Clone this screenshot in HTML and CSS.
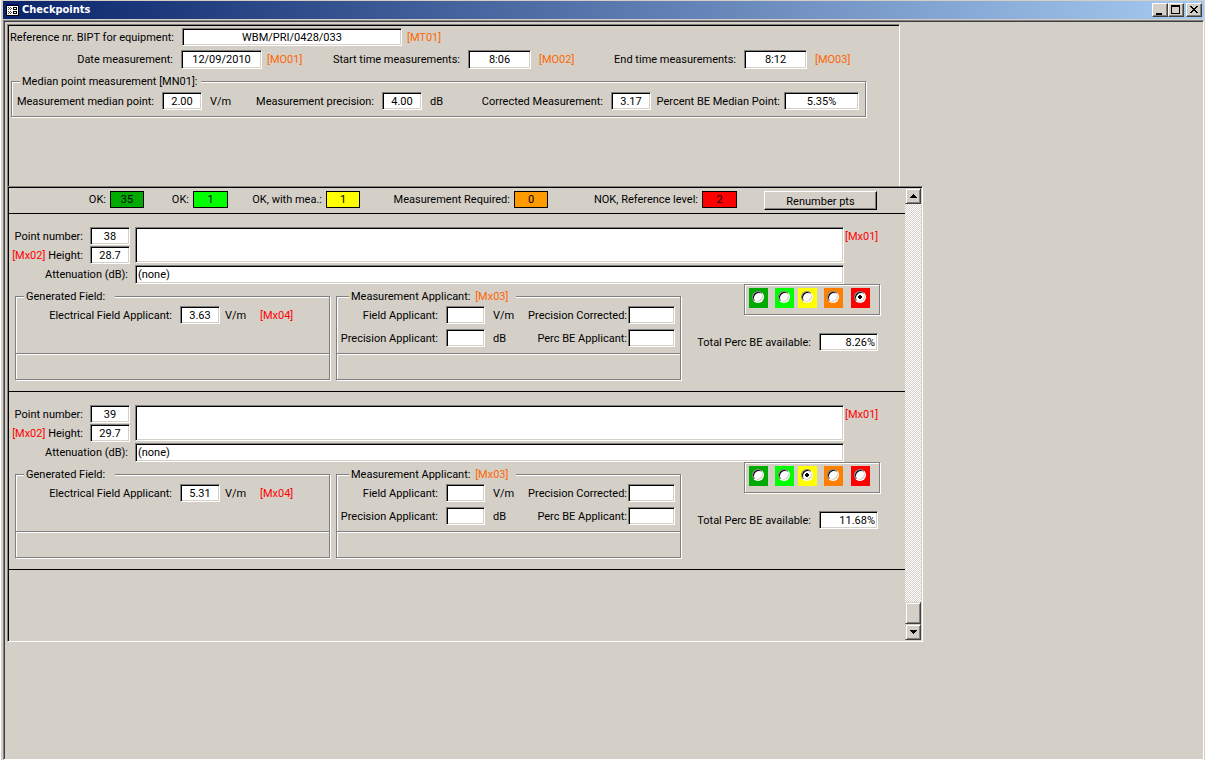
FILE: index.html
```html
<!DOCTYPE html>
<html lang="en">
<head>
<meta charset="utf-8">
<title>Checkpoints</title>
<link rel="stylesheet" href="styles.css">
</head>
<body>
<div class="window">
  <header class="titlebar">
    <svg class="app-icon" width="13" height="12" viewBox="0 0 13 12" shape-rendering="crispEdges" aria-hidden="true">
      <rect width="13" height="12" fill="#000"/>
      <rect width="13" height="1" fill="#000080"/>
      <rect x="1" y="2" width="11" height="9" fill="#fff"/>
      <path d="M2 3h1v1H2zM4 3h1v1H4zM3 4h1v1H3zM5 4h1v1H5zM2 5h1v1H2zM4 5h1v1H4zM2 7h1v1H2zM4 7h1v1H4zM3 8h1v1H3zM5 8h1v1H5zM2 9h1v1H2zM4 9h1v1H4z" fill="#555"/>
      <path fill-rule="evenodd" d="M7 3h4v3H7zM8 4v1h2V4zM7 7h4v3H7zM8 8v1h2V8z" fill="#000"/>
    </svg>
    <h1 class="title">Checkpoints</h1>
    <div class="window-buttons">
      <button class="win-btn" type="button" aria-label="Minimize"><svg width="12" height="10" viewBox="0 0 12 10" shape-rendering="crispEdges"><path d="M2 8h6v2H2z"/></svg></button>
      <button class="win-btn" type="button" aria-label="Maximize"><svg width="12" height="10" viewBox="0 0 12 10" shape-rendering="crispEdges"><path fill-rule="evenodd" d="M1 0h9v9H1zM2 2v6h7V2z"/></svg></button>
      <button class="win-btn close" type="button" aria-label="Close"><svg width="12" height="10" viewBox="0 0 12 10" shape-rendering="crispEdges"><path d="M2 1h2v1h1v1h2V2h1V1h2v1H9v1H8v1H7v1h1v1h1v1h1v1H8V7H7V6H5v1H4v1H2V7h1V6h1V5h1V4H4V3H3V2H2z"/></svg></button>
    </div>
  </header>

  <main class="client">
    <section class="panel general">
      <div class="row row-ref">
        <label class="lbl" for="ref">Reference nr. BIPT for equipment:</label>
        <input class="field" id="ref" value="WBM/PRI/0428/033">
        <span class="tag">[MT01]</span>
      </div>
      <div class="row row-dates">
        <label class="lbl" for="date">Date measurement:</label>
        <input class="field tall" id="date" value="12/09/2010">
        <span class="tag">[MO01]</span>
        <label class="lbl" for="start">Start time measurements:</label>
        <input class="field tall" id="start" value="8:06">
        <span class="tag wide">[MO02]</span>
        <label class="lbl" for="end">End time measurements:</label>
        <input class="field tall" id="end" value="8:12">
        <span class="tag wide">[MO03]</span>
      </div>
      <fieldset class="group median">
        <legend class="legend">Median point measurement [MN01]:</legend>
        <div class="row row-median">
          <label class="lbl" for="median">Measurement median point:</label>
          <input class="field" id="median" value="2.00">
          <span class="unit">V/m</span>
          <label class="lbl" for="precision">Measurement precision:</label>
          <input class="field" id="precision" value="4.00">
          <span class="unit">dB</span>
          <label class="lbl" for="corrected">Corrected Measurement:</label>
          <input class="field" id="corrected" value="3.17">
          <label class="lbl tight" for="percent">Percent BE Median Point:</label>
          <input class="field" id="percent" value="5.35%">
        </div>
      </fieldset>
    </section>

    <section class="panel points">
      <div class="points-main">
        <div class="summary">
          <span class="lbl">OK:</span><output class="count c-green">35</output>
          <span class="lbl">OK:</span><output class="count c-lime">1</output>
          <span class="lbl">OK, with mea.:</span><output class="count c-yellow">1</output>
          <span class="lbl">Measurement Required:</span><output class="count c-amber">0</output>
          <span class="lbl">NOK, Reference level:</span><output class="count c-red">2</output>
          <button class="btn" type="button">Renumber pts</button>
        </div>

        <article class="record">
          <div class="record-head">
            <div class="ident">
              <label class="lbl" for="num1">Point number:</label>
              <input class="field" id="num1" value="38">
              <label class="lbl" for="h1"><span class="red">[Mx02]</span> Height:</label>
              <input class="field" id="h1" value="28.7">
            </div>
            <textarea class="field memo" aria-label="Description"></textarea>
            <span class="mark red">[Mx01]</span>
            <label class="lbl att" for="att1">Attenuation (dB):</label>
            <input class="field tall left" id="att1" value="(none)">
          </div>
          <div class="record-body">
            <div class="stack">
              <fieldset class="group">
                <legend class="legend wide">Generated Field:</legend>
                <div class="cells generated">
                  <label class="lbl" for="el1">Electrical Field Applicant:</label>
                  <input class="field" id="el1" value="3.63">
                  <span class="unit">V/m</span>
                  <span class="red">[Mx04]</span>
                </div>
              </fieldset>
              <div class="footer-box"></div>
            </div>
            <div class="stack">
              <fieldset class="group">
                <legend class="legend inset">Measurement Applicant: <span class="orange">[Mx03]</span></legend>
                <div class="cells measured">
                  <label class="lbl" for="fa1">Field Applicant:</label>
                  <input class="field" id="fa1">
                  <span class="unit">V/m</span>
                  <label class="lbl flush" for="pc1">Precision Corrected:</label>
                  <input class="field" id="pc1">
                  <label class="lbl" for="pa1">Precision Applicant:</label>
                  <input class="field" id="pa1">
                  <span class="unit">dB</span>
                  <label class="lbl flush" for="pb1">Perc BE Applicant:</label>
                  <input class="field" id="pb1">
                </div>
              </fieldset>
              <div class="footer-box"></div>
            </div>
            <div class="result">
              <div class="status group" role="radiogroup" aria-label="Status">
                <label class="swatch c-green"><input type="radio" name="s1" aria-label="OK"></label>
                <label class="swatch c-lime"><input type="radio" name="s1" aria-label="OK"></label>
                <label class="swatch c-yellow"><input type="radio" name="s1" aria-label="OK, with measurement"></label>
                <label class="swatch c-orange"><input type="radio" name="s1" aria-label="Measurement required"></label>
                <label class="swatch c-red"><input type="radio" name="s1" aria-label="Not OK" checked></label>
              </div>
              <div class="total">
                <label class="lbl" for="t1">Total Perc BE available:</label>
                <input class="field right" id="t1" value="8.26%">
              </div>
            </div>
          </div>
        </article>

        <article class="record">
          <div class="record-head">
            <div class="ident">
              <label class="lbl" for="num2">Point number:</label>
              <input class="field" id="num2" value="39">
              <label class="lbl" for="h2"><span class="red">[Mx02]</span> Height:</label>
              <input class="field" id="h2" value="29.7">
            </div>
            <textarea class="field memo" aria-label="Description"></textarea>
            <span class="mark red">[Mx01]</span>
            <label class="lbl att" for="att2">Attenuation (dB):</label>
            <input class="field tall left" id="att2" value="(none)">
          </div>
          <div class="record-body">
            <div class="stack">
              <fieldset class="group">
                <legend class="legend wide">Generated Field:</legend>
                <div class="cells generated">
                  <label class="lbl" for="el2">Electrical Field Applicant:</label>
                  <input class="field" id="el2" value="5.31">
                  <span class="unit">V/m</span>
                  <span class="red">[Mx04]</span>
                </div>
              </fieldset>
              <div class="footer-box"></div>
            </div>
            <div class="stack">
              <fieldset class="group">
                <legend class="legend inset">Measurement Applicant: <span class="orange">[Mx03]</span></legend>
                <div class="cells measured">
                  <label class="lbl" for="fa2">Field Applicant:</label>
                  <input class="field" id="fa2">
                  <span class="unit">V/m</span>
                  <label class="lbl flush" for="pc2">Precision Corrected:</label>
                  <input class="field" id="pc2">
                  <label class="lbl" for="pa2">Precision Applicant:</label>
                  <input class="field" id="pa2">
                  <span class="unit">dB</span>
                  <label class="lbl flush" for="pb2">Perc BE Applicant:</label>
                  <input class="field" id="pb2">
                </div>
              </fieldset>
              <div class="footer-box"></div>
            </div>
            <div class="result">
              <div class="status group" role="radiogroup" aria-label="Status">
                <label class="swatch c-green"><input type="radio" name="s2" aria-label="OK"></label>
                <label class="swatch c-lime"><input type="radio" name="s2" aria-label="OK"></label>
                <label class="swatch c-yellow"><input type="radio" name="s2" aria-label="OK, with measurement" checked></label>
                <label class="swatch c-orange"><input type="radio" name="s2" aria-label="Measurement required"></label>
                <label class="swatch c-red"><input type="radio" name="s2" aria-label="Not OK"></label>
              </div>
              <div class="total">
                <label class="lbl" for="t2">Total Perc BE available:</label>
                <input class="field right" id="t2" value="11.68%">
              </div>
            </div>
          </div>
        </article>
      </div>

      <div class="scrollbar">
        <button class="scroll-btn" type="button" aria-label="Scroll up"><svg width="7" height="4" viewBox="0 0 7 4" shape-rendering="crispEdges"><path d="M3 0h1v1h1v1h1v1h1v1H0V3h1V2h1V1h1z"/></svg></button>
        <div class="track"><div class="thumb"></div></div>
        <button class="scroll-btn" type="button" aria-label="Scroll down"><svg width="7" height="4" viewBox="0 0 7 4" shape-rendering="crispEdges"><path d="M0 0h7v1H6v1H5v1H4v1H3V3H2V2H1V1H0z"/></svg></button>
      </div>
    </section>
  </main>
</div>
</body>
</html>
```

FILE: styles.css
```css
:root {
  --face: #d4d0c8;
  --shade: #808080;
  --dark: #404040;
}

* { box-sizing: border-box; }

body {
  margin: 0;
  background: var(--face);
  color: #000;
  font: 11px/13px Roboto, "Liberation Sans", Arial, sans-serif;
}

input, textarea, button {
  font: inherit;
  color: inherit;
  margin: 0;
  border-radius: 0;
}

.window {
  display: flex;
  flex-direction: column;
  min-height: 100vh;
  padding: 1px 1px 0 2px;
  border-left: 1px solid #fff;
}

/* Title bar */
.titlebar {
  display: flex;
  align-items: center;
  height: 18px;
  padding: 0 2px 0 3px;
  background: linear-gradient(to right, #0a246a, #a6caf0);
}

.title {
  flex: 1;
  margin: 0 0 0 3px;
  color: #fff;
  font: bold 11px/14px "DejaVu Sans Condensed", "DejaVu Sans", sans-serif;
}

.window-buttons { display: flex; }

.win-btn {
  display: flex;
  width: 16px;
  height: 14px;
  padding: 1px;
  background: var(--face);
  border: 1px solid;
  border-color: #fff var(--dark) var(--dark) #fff;
  box-shadow: inset -1px -1px 0 var(--shade);
}

.win-btn.close { margin-left: 2px; }

/* Client area */
.client {
  flex: 1;
  margin-top: 1px;
  padding: 3px;
  border: 1px solid;
  border-color: var(--shade) #fff #fff var(--shade);
  box-shadow: inset 1px 1px 0 var(--dark);
}

.panel {
  padding: 1px;
  border: 1px solid;
  border-color: var(--shade) #fff #fff var(--shade);
  box-shadow: inset 1px 1px 0 #000;
}

.general {
  width: 893px;
  min-height: 162px;
  padding-top: 3px;
  border-bottom: 0;
}

.row, .cells, .ident, .summary {
  display: grid;
  align-items: center;
}

.row-ref { grid-template-columns: 173px 220px auto; justify-content: start; }

.row-dates {
  grid-template-columns: 172px 81px 60px 146px 63px 60px 153px 63px auto;
  justify-content: start;
  margin-top: 4px;
}

.row-median {
  grid-template-columns: 150px 40px 50px 130px 40px 38px 151px 40px 133px 75px;
  padding: 4px 0 6px;
}

.lbl {
  padding-right: 8px;
  text-align: right;
  white-space: nowrap;
}

.lbl.tight { padding-right: 4px; }
.lbl.flush { padding-right: 1px; }
.tag { padding-left: 5px; color: #ff6600; }
.tag.wide { padding-left: 8px; }
.unit { padding-left: 8px; }
.red { color: #ff0000; }
.orange { margin-left: 2px; color: #ff6600; }

.field {
  display: block;
  width: 100%;
  height: 18px;
  padding: 0 2px;
  background: #fff;
  border: 1px solid;
  border-color: var(--shade) #fff #fff var(--shade);
  box-shadow: inset 1px 1px 0 #000, inset -1px -1px 0 var(--face);
  text-align: center;
  outline: 0;
}

.field.tall { height: 19px; }
.field.left { text-align: left; }
.field.right { text-align: right; }

.group {
  min-width: 0;
  margin: 0;
  padding: 0;
  border: 1px solid var(--shade);
  box-shadow: 1px 1px 0 #fff, inset 1px 1px 0 #fff;
}

.legend {
  margin-left: 8px;
  padding: 0 4px 0 2px;
  background: var(--face);
}

.legend.wide { padding-right: 10px; }
.legend.inset { margin-left: 12px; padding-right: 8px; }

.median {
  width: 855px;
  margin: 6px 0 0 2px;
}

/* Points subform */
.points {
  display: flex;
  width: 916px;
  min-height: 456px;
}

.points-main { flex: 1; }

.summary {
  grid-template-columns: 101px 34px 49px 35px 98px 34px 154px 34px 154px 35px 113px;
  align-items: start;
  padding: 3px 0;
  border-bottom: 1px solid #000;
}

.summary .lbl {
  padding-right: 4px;
  line-height: 17px;
}

.summary .btn {
  margin-left: 27px;
  width: 113px;
  height: 19px;
  padding: 1px 0 0;
  background: var(--face);
  border: 1px solid;
  border-color: #fff #000 #000 #fff;
  box-shadow: inset -1px -1px 0 var(--shade);
}

.count {
  height: 17px;
  border: 1px solid #000;
  line-height: 15px;
  text-align: center;
}

.c-green { background: #00aa00; }
.c-lime { background: #00ff00; }
.c-yellow { background: #ffff00; }
.c-amber { background: #ff9900; }
.c-orange { background: #ff8000; }
.c-red { background: #ff0000; }

.record {
  padding: 13px 0 11px;
  border-bottom: 1px solid #000;
}

.record-head {
  display: grid;
  grid-template-columns: 126px 709px auto;
  justify-content: start;
  row-gap: 2px;
}

.record-head .lbl { padding-right: 7px; }

.ident {
  grid-template-columns: 81px 40px;
  align-content: start;
  row-gap: 1px;
  height: 36px;
}

.memo {
  height: 36px;
  resize: none;
  text-align: left;
}

.mark { padding: 3px 0 0 1px; }
.att { align-self: center; }

.record-body {
  display: flex;
  padding-left: 6px;
}

.stack { margin: 6px 6px 0 0; }

.cells {
  align-content: start;
  min-height: 50px;
  padding: 3px 0 6px;
  row-gap: 5px;
}

.generated { grid-template-columns: 164px 40px 40px 69px; }
.generated .unit { padding-left: 5px; }
.measured { grid-template-columns: 109px 39px 40px 103px 47px 5px; }

.footer-box {
  height: 26px;
  border: 1px solid var(--shade);
  border-top: 0;
  box-shadow: 1px 1px 0 #fff, inset 1px 1px 0 #fff;
}

.measured .lbl:not(.flush) { grid-column: 1; }

.result {
  display: flex;
  flex-direction: column;
  align-items: flex-end;
  flex: 1;
  padding-right: 25px;
}

.status {
  display: grid;
  grid-template-columns: 26px 23px 26px 27px 19px;
  width: 136px;
  height: 31px;
  padding: 3px 4px;
}

.swatch {
  display: flex;
  width: 19px;
  height: 20px;
  padding: 3px 0 0 3px;
}

.swatch input {
  appearance: none;
  width: 12px;
  height: 12px;
  background: #fff;
  border: 1px solid;
  border-color: var(--shade) #fff #fff var(--shade);
  border-radius: 50%;
  box-shadow: inset 1px 1px 0 #000, inset -1px -1px 0 var(--face);
}

.swatch input:checked {
  background: radial-gradient(circle, #000 2px, #fff 2px);
}

.total {
  display: grid;
  grid-template-columns: auto 59px;
  align-items: center;
  margin: 18px 2px 0 0;
}

/* Scroll bar */
.scrollbar {
  display: flex;
  flex-direction: column;
  width: 16px;
}

.scroll-btn, .thumb {
  background: var(--face);
  border: 1px solid;
  border-color: var(--face) var(--dark) var(--dark) var(--face);
  box-shadow: inset 1px 1px 0 #fff, inset -1px -1px 0 var(--shade);
}

.scroll-btn {
  display: flex;
  align-items: center;
  justify-content: center;
  height: 16px;
  padding: 0;
}

.track {
  display: flex;
  flex: 1;
  flex-direction: column;
  justify-content: flex-end;
  background: repeating-conic-gradient(#fff 0 25%, var(--face) 0 50%) 0 0 / 2px 2px;
}

.thumb { height: 22px; }
```
